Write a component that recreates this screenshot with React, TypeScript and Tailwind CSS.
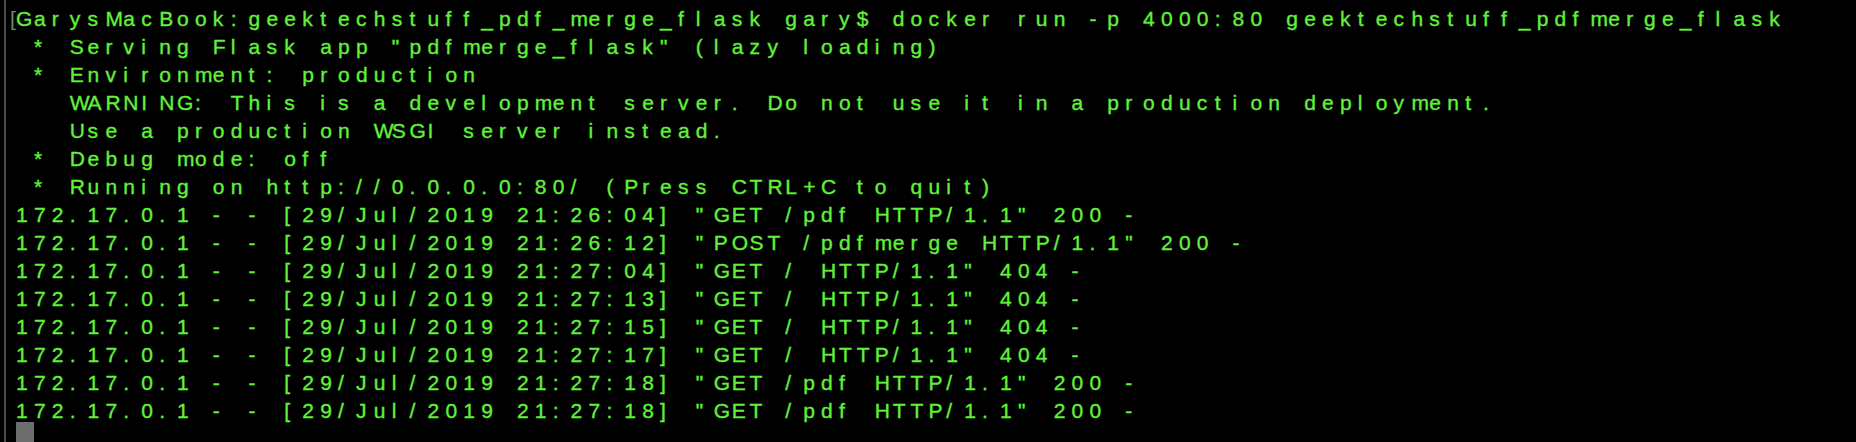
import React from "react";

const lines: string[] = [
  "GarysMacBook:geektechstuff_pdf_merge_flask gary$ docker run -p 4000:80 geektechstuff_pdfmerge_flask",
  ' * Serving Flask app "pdfmerge_flask" (lazy loading)',
  " * Environment: production",
  "   WARNING: This is a development server. Do not use it in a production deployment.",
  "   Use a production WSGI server instead.",
  " * Debug mode: off",
  " * Running on http://0.0.0.0:80/ (Press CTRL+C to quit)",
  '172.17.0.1 - - [29/Jul/2019 21:26:04] "GET /pdf HTTP/1.1" 200 -',
  '172.17.0.1 - - [29/Jul/2019 21:26:12] "POST /pdfmerge HTTP/1.1" 200 -',
  '172.17.0.1 - - [29/Jul/2019 21:27:04] "GET / HTTP/1.1" 404 -',
  '172.17.0.1 - - [29/Jul/2019 21:27:13] "GET / HTTP/1.1" 404 -',
  '172.17.0.1 - - [29/Jul/2019 21:27:15] "GET / HTTP/1.1" 404 -',
  '172.17.0.1 - - [29/Jul/2019 21:27:17] "GET / HTTP/1.1" 404 -',
  '172.17.0.1 - - [29/Jul/2019 21:27:18] "GET /pdf HTTP/1.1" 200 -',
  '172.17.0.1 - - [29/Jul/2019 21:27:18] "GET /pdf HTTP/1.1" 200 -',
];

// each glyph sits at the left of a fixed terminal cell
const TermLine = ({ text }: { text: string }) => {
  return (
    <div className="flex h-[28px] leading-[28px]">
      {text.split("").map((ch, i) => (
        <span key={i} className="inline-block w-[17.9px] shrink-0 whitespace-pre">
          {ch}
        </span>
      ))}
    </div>
  );
};

export default function App() {
  return (
    <div className="relative w-[1856px] h-[442px] overflow-hidden bg-black">
      <div className="absolute left-[4px] top-0 bottom-0 w-[2px] bg-[#4a4a4a]" />
      <div
        className="pl-[16px] pt-[5px] text-[21px] text-[#60f23a] [-webkit-text-stroke:0.35px_#60f23a]"
        style={{ fontFamily: '"Liberation Sans", Arial, sans-serif' }}
      >
        <div className="relative">
          <span className="absolute -left-[6px] top-0 leading-[28px] text-[#6f8f5f] [-webkit-text-stroke:0px]">[</span>
          <TermLine text={lines[0]} />
        </div>
        {lines.slice(1).map((line, idx) => (
          <TermLine key={idx} text={line} />
        ))}
        <div className="-mt-[3px] w-[18px] h-[28px] bg-[#6e6e6e]" />
      </div>
    </div>
  );
}
